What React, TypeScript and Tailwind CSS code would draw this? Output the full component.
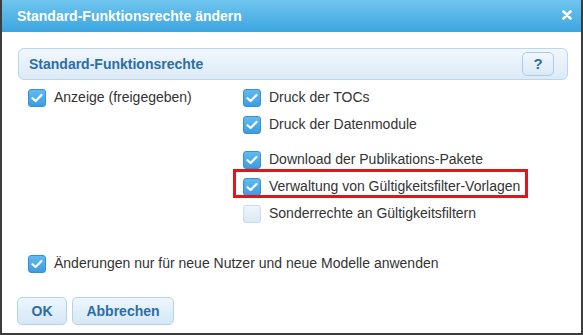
import React from 'react';

const font = { fontFamily: '"Liberation Sans", Arial, sans-serif' };

function Checkbox({ checked }: { checked: boolean }) {
  return checked ? (
    <span className="flex h-[18px] w-[18px] shrink-0 items-center justify-center rounded-[3px] border border-[#3590d6] bg-gradient-to-b from-[#62baee] to-[#3b9de2]">
      <svg width="12" height="10" viewBox="0 0 12 10">
        <path d="M1.5 5.2 L4.6 8 L10.5 2" fill="none" stroke="white" strokeWidth="2.2" strokeLinecap="round" strokeLinejoin="round" />
      </svg>
    </span>
  ) : (
    <span className="h-[18px] w-[18px] shrink-0 rounded-[3px] border border-[#c6dcf0] bg-gradient-to-b from-[#eef5fc] to-[#dde9f6]" />
  );
}

function Row({ checked, label }: { checked: boolean; label: string }) {
  return (
    <div className="flex h-[27px] items-center gap-[8px]">
      <Checkbox checked={checked} />
      <span className="text-[14px] text-[#333]">{label}</span>
    </div>
  );
}

export default function App() {
  return (
    <div style={font} className="flex h-[335px] w-[583px] flex-col overflow-hidden border-x-2 border-b-2 border-[#3c3c3c] bg-white">
      {/* Title bar */}
      <div className="flex h-[32px] shrink-0 items-center justify-between bg-gradient-to-b from-[#6fc5ee] to-[#3aa5e0] pl-[15px] pr-[9px]">
        <span className="text-[14px] font-bold text-white">Standard-Funktionsrechte ändern</span>
        <svg width="10" height="10" viewBox="0 0 10 10" className="mb-[3px]">
          <path d="M1.5 1.5 L8.5 8.5 M8.5 1.5 L1.5 8.5" stroke="white" strokeWidth="2.6" strokeLinecap="round" />
        </svg>
      </div>

      <div className="flex flex-1 flex-col pl-[14px] pt-[16px]">
        {/* Panel header */}
        <div className="ml-[2px] flex h-[32px] w-[550px] items-center justify-between rounded-[6px] border border-[#b9d7ee] bg-gradient-to-b from-[#f1f7fd] to-[#dceaf7] pl-[10px] pr-[13px]">
          <span className="text-[14px] font-bold text-[#2c6ea6]">Standard-Funktionsrechte</span>
          <div className="flex h-[24px] w-[32px] items-center justify-center rounded-[5px] border border-[#a9cde9] bg-gradient-to-b from-[#f1f7fd] to-[#dbe9f6] text-[15px] font-bold text-[#2c6ea6]">
            ?
          </div>
        </div>

        {/* Checkboxes */}
        <div className="mt-[4px] flex">
          <div className="ml-[12px] w-[215px]">
            <Row checked label="Anzeige (freigegeben)" />
          </div>
          <div className="flex flex-col">
            <Row checked label="Druck der TOCs" />
            <Row checked label="Druck der Datenmodule" />
            <div className="h-[8px]" />
            <Row checked label="Download der Publikations-Pakete" />
            <div className="relative">
              <Row checked label="Verwaltung von Gültigkeitsfilter-Vorlagen" />
              <div className="pointer-events-none absolute left-[-10px] top-[-4px] h-[29px] w-[295px] border-[3px] border-[#e3141b]" />
            </div>
            <Row checked={false} label="Sonderrechte an Gültigkeitsfiltern" />
          </div>
        </div>

        <div className="ml-[12px] mt-[23px]">
          <Row checked label="Änderungen nur für neue Nutzer und neue Modelle anwenden" />
        </div>

        {/* Buttons */}
        <div className="ml-[1px] mt-[20px] flex gap-[5px]">
          <button className="flex h-[28px] w-[50px] items-center justify-center rounded-[5px] border border-[#b3d3ec] bg-gradient-to-b from-[#eef6fd] to-[#d5e7f6] text-[14px] font-bold text-[#2c6ea6]">
            OK
          </button>
          <button className="flex h-[28px] w-[102px] items-center justify-center rounded-[5px] border border-[#b3d3ec] bg-gradient-to-b from-[#eef6fd] to-[#d5e7f6] text-[14px] font-bold text-[#2c6ea6]">
            Abbrechen
          </button>
        </div>
      </div>
    </div>
  );
}
